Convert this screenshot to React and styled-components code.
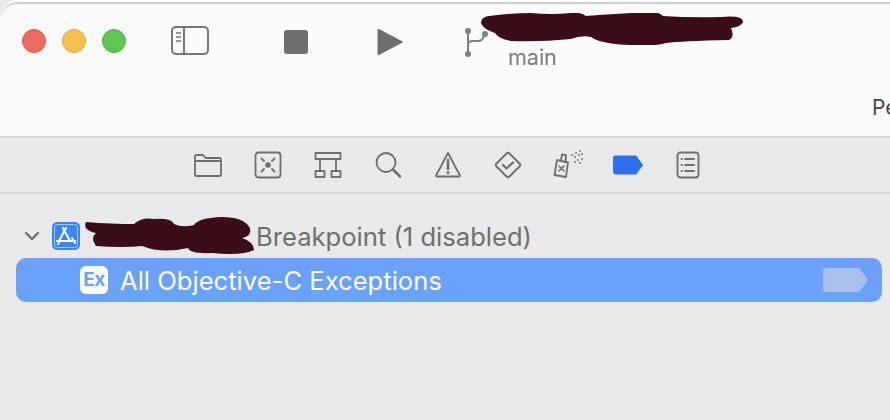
import React from "react";
import styled, { createGlobalStyle } from "styled-components";

const GlobalStyle = createGlobalStyle`
  html, body {
    margin: 0;
    padding: 0;
    background: #e9e9e9;
  }
  body {
    font-family: "Inter", "Liberation Sans", sans-serif;
  }
`;

const Page = styled.div`
  width: 890px;
  height: 420px;
  overflow: hidden;
  background: #e9e9e9;
`;

const Toolbar = styled.header`
  height: 132px;
  background: #fafafa;
  border-top: 2px solid #cfcfcf;
  border-bottom: 2px solid #d4d4d4;
  border-top-left-radius: 18px;
  box-shadow: 0 -2px 0 #fff;
  margin-top: 2px;
  box-sizing: content-box;
  display: flex;
  flex-direction: column;
`;

const TopRow = styled.div`
  height: 91px;
  display: flex;
  align-items: flex-start;
  padding-left: 22px;
`;

const Lights = styled.div`
  display: flex;
  gap: 16px;
  margin-top: 25px;
`;

const Light = styled.span`
  width: 24px;
  height: 24px;
  border-radius: 50%;
  box-sizing: border-box;
  background: ${(p) => p.$fill};
  border: 1px solid ${(p) => p.$edge};
`;

const ToolIcon = styled.svg`
  flex: none;
  margin-left: ${(p) => p.$left}px;
  margin-top: ${(p) => p.$top}px;
`;

const Scheme = styled.div`
  position: relative;
  margin-left: 16px;
  padding-top: 40px;
  font-size: 21.500px;
  line-height: 26px;
  color: #7d7d7d;
`;

const Scribble = styled.svg`
  position: absolute;
  fill: #3a0d18;
  left: ${(p) => p.$left}px;
  top: ${(p) => p.$top}px;
`;

const StatusRow = styled.div`
  padding-left: 872px;
  font-size: 21px;
  line-height: 26px;
  color: #444;
  white-space: nowrap;
`;

const TabBar = styled.nav`
  height: 54px;
  border-bottom: 2px solid #d6d6d6;
  display: flex;
  align-items: center;
  padding-left: 178px;
`;

const Tab = styled.div`
  width: 60px;
  height: 30px;
  display: flex;
  align-items: center;
  justify-content: center;
  svg {
    fill: none;
    stroke: ${(p) => (p.$active ? "#2e6fed" : "#6e6e6e")};
    stroke-width: 1.800;
    stroke-linecap: round;
    stroke-linejoin: round;
  }
`;

const List = styled.section`
  padding: 20px 8px 0 16px;
`;

const GroupRow = styled.div`
  height: 44px;
  display: flex;
  align-items: center;
  padding-left: 8px;
  font-size: 25.600px;
  color: #6f6f6f;
  position: relative;
`;

const Redacted = styled.div`
  width: 175px;
  flex: none;
  height: 40px;
  position: relative;
`;

const SelectedRow = styled.div`
  height: 44px;
  background: #6aa1fb;
  border-radius: 10px;
  display: flex;
  align-items: center;
  padding: 0 13px 0 64px;
  font-size: 25.600px;
  color: #fff;
`;

const ExBadge = styled.span`
  width: 28px;
  height: 28px;
  border-radius: 6px;
  background: #fff;
  color: #6aa1fb;
  font-size: 19px;
  font-weight: 700;
  line-height: 28px;
  text-align: center;
  letter-spacing: -0.500px;
  margin-right: 12px;
`;

const RowLabel = styled.span`
  flex: 1;
`;

const icon = { width: 30, height: 30, viewBox: "0 0 30 30" };

const App = () => (
  <Page>
    <GlobalStyle />
    <Toolbar>
      <TopRow>
        <Lights>
          <Light $fill="#ef6b60" $edge="#dc5a50" />
          <Light $fill="#f6c04f" $edge="#e0a83c" />
          <Light $fill="#5fc553" $edge="#50ae46" />
        </Lights>
        <ToolIcon $left={44} $top={21} width="40" height="31" viewBox="0 0 40 31" fill="none" stroke="#767676" strokeWidth="2">
          <rect x="2" y="2" width="36" height="27" rx="4" />
          <path d="M14 2v27" />
          <path d="M6 8h5M6 12h5M6 16h5" strokeWidth="1.500" />
        </ToolIcon>
        <ToolIcon $left={74} $top={26} width="24" height="24" viewBox="0 0 24 24">
          <rect width="24" height="24" rx="3" fill="#6e6e6e" />
        </ToolIcon>
        <ToolIcon $left={69} $top={24} width="27" height="28" viewBox="0 0 27 28">
          <path d="M2 1.500L25.500 14 2 26.500Q1 27 1 26V2Q1 1 2 1.500Z" fill="#6e6e6e" stroke="#6e6e6e" strokeWidth="1" strokeLinejoin="round" />
        </ToolIcon>
        <ToolIcon $left={60} $top={22} width="28" height="32" viewBox="0 0 28 32" fill="none" stroke="#808080" strokeWidth="2">
          <path d="M4 6v22M4 19q0-4 5-4h5q5 0 6-6" />
          <circle cx="4" cy="5" r="3" fill="#808080" stroke="none" />
          <circle cx="4" cy="28" r="3" fill="#808080" stroke="none" />
          <circle cx="21" cy="8" r="3" fill="#808080" stroke="none" />
        </ToolIcon>
        <Scheme>
          main
          <Scribble $left={-27} $top={9} width="262" height="32" viewBox="0 0 262 32">
            <path d="M8 3Q30 0 50 0Q70 2 90 0Q100 -1 105 3Q130 1 170 -1Q178 -1 182 3Q210 5 240 4Q262 2 262 9Q260 14 250 15Q254 24 248 27Q200 28 185 30Q170 34 150 32Q120 31 110 24Q100 22 90 26Q60 29 30 28Q18 26 14 20Q2 16 0 10Q0 4 8 3Z" />
          </Scribble>
        </Scheme>
      </TopRow>
      <StatusRow>Pe</StatusRow>
    </Toolbar>
    <TabBar>
      <Tab>
        <svg {...icon}>
          <path d="M2 9V6.500Q2 5 3.500 5H10l2.500 3H26.500Q28 8 28 9.500V24.500Q28 26 26.500 26H3.500Q2 26 2 24.500Z" />
          <path d="M2 11H28" />
        </svg>
      </Tab>
      <Tab>
        <svg {...icon}>
          <rect x="2.500" y="2.500" width="25" height="25" rx="3" />
          <circle cx="15" cy="15" r="2.800" fill="#6e6e6e" stroke="none" />
          <path d="M8.500 8.500l2.500 2.500M21.500 8.500L19 11M8.500 21.500L11 19M21.500 21.500L19 19" />
        </svg>
      </Tab>
      <Tab>
        <svg {...icon}>
          <rect x="2.500" y="3" width="25" height="6" />
          <path d="M7 9v12M23 9v12" />
          <rect x="2.500" y="21" width="9" height="6" />
          <rect x="18.500" y="21" width="9" height="6" />
        </svg>
      </Tab>
      <Tab>
        <svg {...icon}>
          <circle cx="13" cy="12.500" r="9.500" />
          <path d="M20 19.500L27 26.500" strokeWidth="2.500" />
        </svg>
      </Tab>
      <Tab>
        <svg {...icon}>
          <path d="M15 3L27 25.500Q27 26.500 26 26.500H4Q3 26.500 3 25.500Z" />
          <path d="M15 10v9" strokeWidth="2.500" />
          <circle cx="15" cy="22.500" r="1.500" fill="#6e6e6e" stroke="none" />
        </svg>
      </Tab>
      <Tab>
        <svg {...icon}>
          <path d="M13.500 3.500Q15 2 16.500 3.500L26.500 13.500Q28 15 26.500 16.500L16.500 26.500Q15 28 13.500 26.500L3.500 16.500Q2 15 3.500 13.500Z" />
          <path d="M10 15l3.500 3.500L20 12.500" strokeWidth="2.200" />
        </svg>
      </Tab>
      <Tab>
        <svg {...icon}>
          <path d="M4 10L15 12.500 13 27 1.500 25Z" />
          <path d="M8 10.500L9 4.500 13 5.200 12.500 11.500" />
          <path d="M6 16l5 5M11 16l-5 5" strokeWidth="1.600" />
          <path d="M19 5h.1M23 3h.1M27 1h.1M22 7h.1M26 5h.1M25 10h.1M29 9h.1M22 12h.1M27 13h.1M29 4h.1" strokeWidth="1.800" />
        </svg>
      </Tab>
      <Tab $active>
        <svg {...icon}>
          <path d="M0.500 6.500Q0.500 6 2.500 6H23L29.500 15 23 24H2.500Q0.500 24 0.500 22Z" fill="#2e6fed" stroke="#2e6fed" strokeWidth="1" />
        </svg>
      </Tab>
      <Tab>
        <svg {...icon}>
          <rect x="4.500" y="2.500" width="21" height="25" rx="3" />
          <path d="M12 9h9M12 15h9M12 21h9" />
          <path d="M8.500 9h.5M8.500 15h.5M8.500 21h.5" />
        </svg>
      </Tab>
    </TabBar>
    <List>
      <GroupRow>
        <svg width="16" height="10" viewBox="0 0 16 10" fill="none" stroke="#6e6e6e" strokeWidth="2.400" strokeLinecap="round" strokeLinejoin="round">
          <path d="M2 2l6 6 6-6" />
        </svg>
        <svg width="30" height="30" viewBox="0 0 30 30" style={{ marginLeft: 11, flex: "none" }}>
          <rect x="1" y="1" width="28" height="28" rx="5" fill="#3b86f6" />
          <rect x="3.500" y="3.500" width="23" height="23" rx="3" fill="none" stroke="#a9cbfb" strokeWidth="1" />
          <path d="M15 7l-7 13M12 7l7 13M6 20h18M21 17l3 5M9 20l-2 3" fill="none" stroke="#fff" strokeWidth="2" strokeLinecap="round" />
        </svg>
        <Redacted>
          <Scribble $left={1} $top={0} width="174" height="40" viewBox="0 0 174 40">
            <path d="M4 6Q30 8 52 8Q60 1 72 3Q90 2 92 8Q100 12 112 9Q116 2 140 1Q162 1 168 12Q170 20 160 22Q172 26 172 34Q160 40 130 37Q108 38 106 32Q80 38 60 30Q40 32 14 30Q8 22 14 17Q0 14 4 6Z" />
          </Scribble>
        </Redacted>
        Breakpoint (1 disabled)
      </GroupRow>
      <SelectedRow>
        <ExBadge>Ex</ExBadge>
        <RowLabel>All Objective-C Exceptions</RowLabel>
        <svg width="46" height="24" viewBox="0 0 46 24">
          <path d="M3 0H36L45 12 36 24H3Q0 24 0 21V3Q0 0 3 0Z" fill="#a9c0ec" />
        </svg>
      </SelectedRow>
    </List>
  </Page>
);

export default App;
